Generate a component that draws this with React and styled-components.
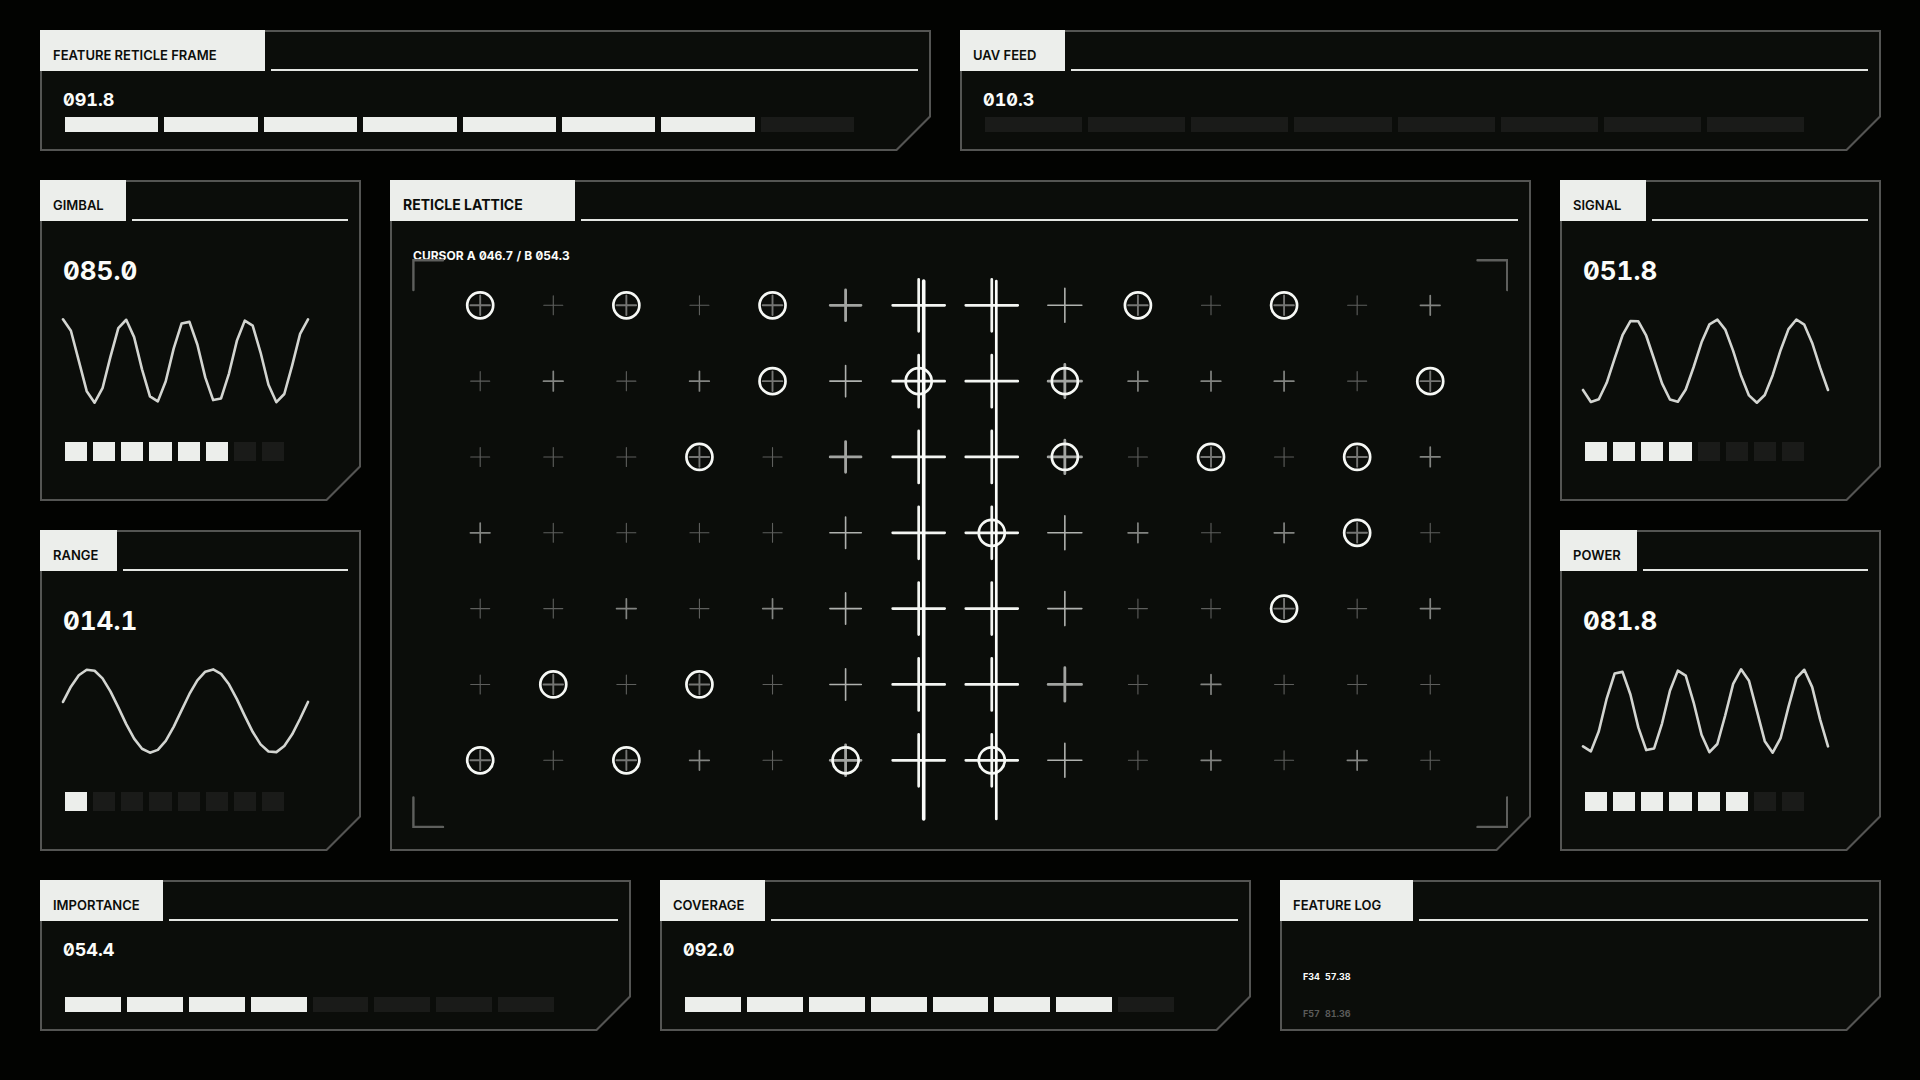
import React from 'react'
import styled, { createGlobalStyle } from 'styled-components';

const GlobalStyle = createGlobalStyle`
    * {
        box-sizing: border-box;
    }
    body {
        margin: 0;
        background-color: #020301;
        color: #fbfcfa;
        font-family: Inter, "Liberation Sans", sans-serif;
        font-weight: 700;
    }
`;

const Screen = styled.main`
    min-height: 100vh;
    padding: 30px 40px 50px;
    display: grid;
    grid-template-rows: 120px 1fr 150px;
    gap: 30px;
`;
const TopRow = styled.div`
    display: grid;
    grid-template-columns: 89fr 92fr;
    gap: 30px;
`;
const MiddleRow = styled.div`
    display: grid;
    grid-template-columns: 320px 1fr 320px;
    gap: 30px;
`;
const BottomRow = styled.div`
    display: grid;
    grid-template-columns: 59fr 59fr 60fr;
    gap: 30px;
`;
const SideColumn = styled.div`
    display: grid;
    grid-template-rows: 1fr 1fr;
    gap: 30px;
`;

// the frame is two stacked shapes, so that the cut corner gets a line too
const PanelFrame = styled.section`
    position: relative;
    z-index: 0;
    min-width: 0;
    display: flex;
    flex-direction: column;

    &::before, &::after {
        content: '';
        position: absolute;
        z-index: -1;
    }
    &::before {
        inset: 0 -1px -1px 0;
        background-color: #545553;
        clip-path: polygon(0 0, 100% 0, 100% calc(100% - 34px), calc(100% - 34px) 100%, 0 100%);
    }
    &::after {
        inset: 2px 1px 1px 2px;
        background-color: #0b0d0a;
        clip-path: polygon(0 0, 100% 0, 100% calc(100% - 33px), calc(100% - 33px) 100%, 0 100%);
    }
`;
const PanelHeader = styled.header`
    display: flex;
    align-items: flex-end;
    gap: 6px;
    padding-right: 12px;
`;
const PanelTitle = styled.h2`
    margin: 0;
    width: ${props => props.$width}px;
    height: 41px;
    padding: 15px 0 0 13px;
    background-color: #eceeeb;
    color: #0b0d0a;
    font-size: ${props => props.$large ? 14 : 13}px;
    font-weight: ${props => props.$large ? 700 : 600};
    line-height: 20px;
    white-space: nowrap;
`;
const HeaderRule = styled.div`
    flex: 1;
    height: 2px;
    background-color: #e4e6e3;
`;

const Value = styled.div`
    font-size: ${props => props.$large ? 26 : 18}px;
    line-height: ${props => props.$large ? 30 : 20}px;
    font-feature-settings: 'tnum', 'zero';
`;
const StripBody = styled.div`
    flex: 1;
    display: flex;
    flex-direction: column;
    justify-content: space-between;
    padding: 19px 76px 18px 23px;
`;
const GaugeBody = styled.div`
    flex: 1;
    display: flex;
    flex-direction: column;
    justify-content: space-between;
    padding: 35px 52px 39px 23px;
`;
const Meter = styled.div`
    display: flex;
    gap: 6px;
    height: ${props => props.$tall ? 19 : 15}px;
    margin: ${props => props.$tall ? '0 24px 0 2px' : '0 0 0 2px'};
`;
const MeterCell = styled.div`
    flex: 1;
    background-color: ${props => props.$on ? '#eceeeb' : '#1a1b19'};
`;
const WaveSvg = styled.svg`
    display: block;
    width: 100%;
    height: 90px;
    margin-bottom: 6px;
    overflow: visible;
`;

const LatticeBody = styled.div`
    flex: 1;
    display: flex;
    flex-direction: column;
    padding: 25px 22px 22px;
`;
const CursorText = styled.div`
    padding-left: 1px;
    font-size: 12px;
    line-height: 20px;
    font-feature-settings: 'tnum', 'zero';
`;
const LatticeSvg = styled.svg`
    display: block;
    width: 100%;
    margin-top: -7px;
`;

const LogList = styled.ul`
    list-style: none;
    margin: 0;
    padding: 47px 23px 0;
    font-size: 9px;
    line-height: 17px;
    font-feature-settings: 'tnum', 'zero';
    display: flex;
    flex-direction: column;
    gap: 20px;
`;
const LogEntry = styled.li`
    display: flex;
    gap: 5px;
    color: ${props => props.$faded ? '#5a5b59' : '#fbfcfa'};
`;

const CELLS = 8;

function SegmentMeter({ value, tall, label }) {
    const filled = Math.floor(value / 100 * CELLS);
    return (<Meter $tall={tall} role="meter" aria-label={label} aria-valuenow={value} aria-valuemin={0} aria-valuemax={100}>
        {Array.from({ length: CELLS }, (_, i) => <MeterCell key={i} $on={i < filled} />)}
    </Meter>);
}

function Wave({ cycles, phase }) {
    const steps = 31;
    const points = [];
    for (let i = 0; i <= steps; i++) {
        const angle = (phase + i * cycles * 360 / steps) * Math.PI / 180;
        points.push(`${(i * 245 / steps).toFixed(2)},${(45 - 41.7 * Math.sin(angle)).toFixed(2)}`);
    }
    return (<WaveSvg viewBox="0 0 245 90" preserveAspectRatio="none" aria-hidden="true">
        <polyline
            points={points.join(' ')}
            fill="none"
            stroke="#d3d5d1"
            strokeWidth="2.6"
            strokeLinecap="round"
            strokeLinejoin="round"
            vectorEffect="non-scaling-stroke"
        />
    </WaveSvg>);
}

function Panel({ title, tagWidth, large, children }) {
    return (<PanelFrame>
        <PanelHeader>
            <PanelTitle $width={tagWidth} $large={large}>{title}</PanelTitle>
            <HeaderRule />
        </PanelHeader>
        {children}
    </PanelFrame>);
}

const format = value => value.toFixed(1).padStart(5, '0');

function StripPanel({ title, tagWidth, value }) {
    return (<Panel title={title} tagWidth={tagWidth}>
        <StripBody>
            <Value>{format(value)}</Value>
            <SegmentMeter value={value} label={title} />
        </StripBody>
    </Panel>);
}

function GaugePanel({ title, tagWidth, value, cycles, phase }) {
    return (<Panel title={title} tagWidth={tagWidth}>
        <GaugeBody>
            <Value $large>{format(value)}</Value>
            <Wave cycles={cycles} phase={phase} />
            <SegmentMeter value={value} label={title} tall />
        </GaugeBody>
    </Panel>);
}

// . faint   + medium   o ringed   x strong   X strong and heavy   R strong, heavy, ringed
// # cursor column   @ cursor column, ringed
const LATTICE = [
    'o.o.oX##xo.o.+',
    '.+.+ox@#R+++.o',
    '...o.X##R.o.o+',
    '+....x#@x+.+o.',
    '..+.+x##x..o.+',
    '.o.o.x##X.+...',
    'o.o+.R#@x.+.+.',
];
const MARKS = {
    '.': { half: 9.5, width: 1.1, color: '#5e5f5d' },
    '+': { half: 9.8, width: 1.7, color: '#828481' },
    'o': { half: 9.8, width: 1.9, color: '#747573', ring: true },
    'x': { half: 15.7, width: 1.6, color: '#afb1ae' },
    'X': { half: 15.4, width: 2.8, color: '#a2a4a1' },
    'R': { half: 15.4, width: 2.8, color: '#a2a4a1', ring: true },
    '#': { half: 26, width: 2.7, color: '#f3f5f2' },
    '@': { half: 26, width: 2.7, color: '#f3f5f2', ring: true },
};

function Mark({ x, y, kind, wide }) {
    const { width, color, ring } = MARKS[kind];
    const half = MARKS[kind].half + (wide ? 1.3 : 0);
    return (<g fill="none" strokeLinecap="round">
        <path d={`M${x - half} ${y}H${x + half}M${x} ${y - half}V${y + half}`} stroke={color} strokeWidth={width} />
        {ring && <circle cx={x} cy={y} r="13" stroke="#f6f8f5" strokeWidth="2.7" />}
    </g>);
}

function Lattice() {
    return (<LatticeSvg viewBox="0 0 1096 569" role="img" aria-label="Reticle lattice">
        <g fill="none" stroke="#5e5f5d" strokeWidth="2.4" strokeLinecap="round">
            <path d="M1.4 31V1.2H31" />
            <path d="M1065.5 1.2H1095.2V31" />
            <path d="M1.4 538.5V568H31" />
            <path d="M1065.5 568H1095.2V538.5" />
        </g>
        {LATTICE.map((row, j) => row.split('').map((kind, i) => (
            <Mark key={`${i}-${j}`} x={68.2 + i * 73.08} y={46.3 + j * 75.83} kind={kind} wide={i === 8} />
        )))}
        <g stroke="#fbfcfa" strokeLinecap="round">
            <path d="M511.7 22V560" strokeWidth="3.6" />
            <path d="M584.3 22V560" strokeWidth="2.7" />
        </g>
    </LatticeSvg>);
}

export default function App() {
    return (<>
        <GlobalStyle />
        <Screen>
            <TopRow>
                <StripPanel title="FEATURE RETICLE FRAME" tagWidth={225} value={91.8} />
                <StripPanel title="UAV FEED" tagWidth={105} value={10.3} />
            </TopRow>
            <MiddleRow>
                <SideColumn>
                    <GaugePanel title="GIMBAL" tagWidth={86} value={85} cycles={4} phase={87} />
                    <GaugePanel title="RANGE" tagWidth={77} value={14.1} cycles={2} phase={12.5} />
                </SideColumn>
                <Panel title="RETICLE LATTICE" tagWidth={185} large>
                    <LatticeBody>
                        <CursorText>CURSOR A 046.7 / B 054.3</CursorText>
                        <Lattice />
                    </LatticeBody>
                </Panel>
                <SideColumn>
                    <GaugePanel title="SIGNAL" tagWidth={86} value={51.8} cycles={3} phase={224} />
                    <GaugePanel title="POWER" tagWidth={77} value={81.8} cycles={4} phase={238} />
                </SideColumn>
            </MiddleRow>
            <BottomRow>
                <StripPanel title="IMPORTANCE" tagWidth={123} value={54.4} />
                <StripPanel title="COVERAGE" tagWidth={105} value={92} />
                <Panel title="FEATURE LOG" tagWidth={133}>
                    <LogList>
                        <LogEntry><span>F34</span><span>57.38</span></LogEntry>
                        <LogEntry $faded><span>F57</span><span>81.36</span></LogEntry>
                    </LogList>
                </Panel>
            </BottomRow>
        </Screen>
    </>);
}
